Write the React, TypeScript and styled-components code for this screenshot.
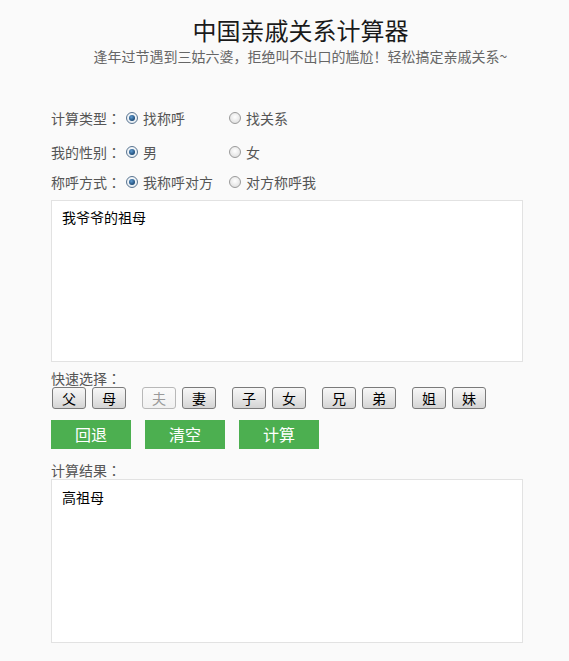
import React from "react";
import styled, { createGlobalStyle, css } from "styled-components";

const Global = createGlobalStyle`
  html, body { margin: 0; padding: 0; background: #fafafa; }
  body { font-family: "Noto Sans CJK SC", "Noto Sans", sans-serif; color: #555; }
  * { box-sizing: border-box; }
`;

const Page = styled.div`
  width: 569px;
  min-height: 661px;
  background: #fafafa;
`;

const Header = styled.header`
  padding: 14px 0 0 32px;
  text-align: center;
`;

const Title = styled.h1`
  margin: 0;
  font-size: 24px;
  line-height: 32px;
  font-weight: normal;
  color: #1a1a1a;
`;

const Subtitle = styled.p`
  margin: 0;
  font-size: 14px;
  line-height: 20px;
  color: #666;
`;

const Main = styled.main`
  padding: 37px 0 0 51px;
  width: 523px;
`;

const Row = styled.div<{ $gapAfter?: number }>`
  display: flex;
  align-items: center;
  height: 30px;
  margin-bottom: ${(p) => p.$gapAfter ?? 0}px;
  font-size: 14px;
  color: #555;
`;

const RowLabel = styled.span`
  width: 75px;
  flex: none;
`;

const Colon = styled.span`
  font-family: "Noto Sans CJK TC", "Noto Sans CJK SC", sans-serif;
`;

const Option = styled.label`
  width: 103px;
  flex: none;
  display: flex;
  align-items: center;
  gap: 5px;
`;

const RadioDot = styled.span<{ $checked?: boolean }>`
  width: 12px;
  height: 12px;
  border-radius: 50%;
  border: 1px solid #9a9a9a;
  flex: none;
  background: radial-gradient(circle at 50% 40%, #ffffff 0%, #e4e4e4 70%, #cfcfcf 100%);
  display: flex;
  align-items: center;
  justify-content: center;
  ${(p) =>
    p.$checked &&
    css`
      border-color: #5a7591;
      background: radial-gradient(circle at 50% 40%, #ffffff 0%, #dde6ee 100%);
      &::after {
        content: "";
        width: 6px;
        height: 6px;
        border-radius: 50%;
        background: radial-gradient(circle at 40% 35%, #5f9bd0 0%, #1d4b78 70%, #103150 100%);
      }
    `}
`;

const TextBox = styled.textarea<{ $h: number; $pt: number }>`
  display: block;
  width: 472px;
  height: ${(p) => p.$h}px;
  margin: 0;
  padding: ${(p) => p.$pt}px 10px 0;
  border: 1px solid #e2e2e2;
  background: #fff;
  resize: none;
  outline: none;
  font-family: "Noto Sans CJK SC", "Noto Sans", sans-serif;
  font-size: 14px;
  line-height: 20px;
  color: #000;
`;

const SectionLabel = styled.div<{ $mt: number }>`
  margin-top: ${(p) => p.$mt}px;
  height: 18px;
  line-height: 18px;
  font-size: 14px;
  color: #555;
`;

const QuickBar = styled.div`
  display: flex;
  gap: 16px;
  padding-left: 1px;
`;

const QuickGroup = styled.div`
  display: flex;
  gap: 6px;
`;

const QuickButton = styled.button`
  width: 34px;
  height: 22px;
  padding: 0;
  border: 1px solid #7a7a7a;
  border-radius: 3px;
  background: linear-gradient(#f7f7f7, #e6e6e6 55%, #d4d4d4);
  font-family: "Noto Sans CJK SC", "Noto Sans", sans-serif;
  font-size: 14px;
  line-height: 20px;
  color: #000;
  &:disabled {
    border-color: #b8b8b8;
    background: linear-gradient(#fbfbfb, #f1f1f1);
    color: #9a9a9a;
  }
`;

const ActionBar = styled.div`
  display: flex;
  gap: 14px;
  margin-top: 11px;
`;

const ActionButton = styled.button`
  width: 80px;
  height: 29px;
  padding: 0;
  border: none;
  background: #4caf50;
  color: #fff;
  font-family: "Noto Sans CJK SC", "Noto Sans", sans-serif;
  font-size: 16px;
  line-height: 29px;
`;

const rows = [
  { label: "计算类型", opts: ["找称呼", "找关系"], gap: 4 },
  { label: "我的性别", opts: ["男", "女"], gap: 0 },
  { label: "称呼方式", opts: ["我称呼对方", "对方称呼我"], gap: 3 },
];

const quick = [["父", "母"], ["夫", "妻"], ["子", "女"], ["兄", "弟"], ["姐", "妹"]];

export default function App() {
  return (
    <Page>
      <Global />
      <Header>
        <Title>中国亲戚关系计算器</Title>
        <Subtitle>逢年过节遇到三姑六婆，拒绝叫不出口的尴尬！轻松搞定亲戚关系~</Subtitle>
      </Header>
      <Main>
        {rows.map((r) => (
          <Row key={r.label} $gapAfter={r.gap}>
            <RowLabel>
              {r.label}
              <Colon>：</Colon>
            </RowLabel>
            {r.opts.map((o, i) => (
              <Option key={o}>
                <RadioDot $checked={i === 0} />
                {o}
              </Option>
            ))}
          </Row>
        ))}
        <TextBox $h={162} $pt={6} defaultValue="我爷爷的祖母" />
        <SectionLabel $mt={7}>
          快速选择<Colon>：</Colon>
        </SectionLabel>
        <QuickBar>
          {quick.map((g, gi) => (
            <QuickGroup key={gi}>
              {g.map((q) => (
                <QuickButton key={q} disabled={q === "夫"}>
                  {q}
                </QuickButton>
              ))}
            </QuickGroup>
          ))}
        </QuickBar>
        <ActionBar>
          <ActionButton>回退</ActionButton>
          <ActionButton>清空</ActionButton>
          <ActionButton>计算</ActionButton>
        </ActionBar>
        <SectionLabel $mt={12}>
          计算结果<Colon>：</Colon>
        </SectionLabel>
        <TextBox $h={164} $pt={7} defaultValue="高祖母" />
      </Main>
    </Page>
  );
}
